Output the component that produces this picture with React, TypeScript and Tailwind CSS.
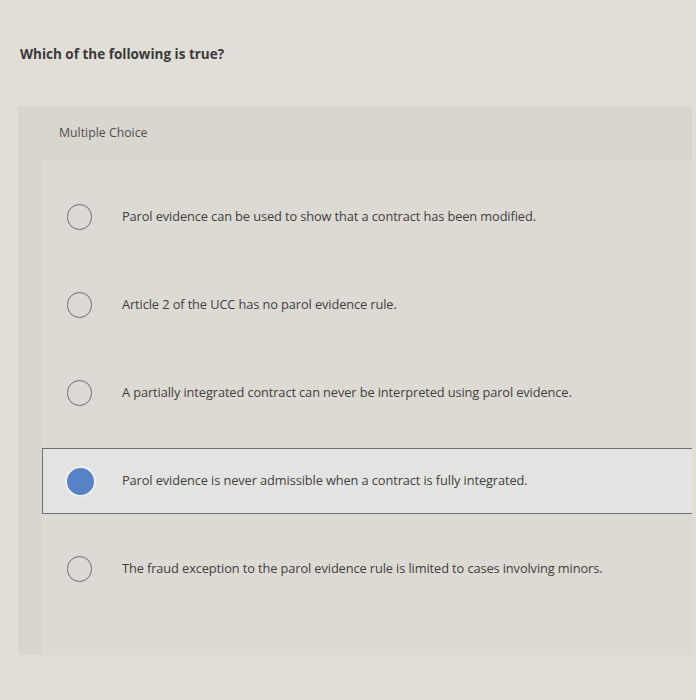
const options = [
  { id: "a", text: "Parol evidence can be used to show that a contract has been modified." },
  { id: "b", text: "Article 2 of the UCC has no parol evidence rule." },
  { id: "c", text: "A partially integrated contract can never be interpreted using parol evidence." },
  { id: "d", text: "Parol evidence is never admissible when a contract is fully integrated.", selected: true },
  { id: "e", text: "The fraud exception to the parol evidence rule is limited to cases involving minors." },
];

function Radio({ selected }: { selected?: boolean }) {
  if (selected) {
    return (
      <span className="ml-[22px] mr-[26px] size-[31px] shrink-0 rounded-full border-2 border-[#eef0f0] bg-[#5783c6]" />
    );
  }
  return (
    <span className="ml-[24px] mr-[30px] h-[26px] w-[25px] shrink-0 rounded-full border-[1.5px] border-[#6e6e6e]" />
  );
}

export default function App() {
  return (
    <main
      className="h-[700px] overflow-hidden bg-[#e1ded8] pt-[44px] text-[#424242]"
      style={{ fontFamily: "'Open Sans', Lato, sans-serif" }}
    >
      <h1 className="pl-5 text-[13.5px] font-bold leading-5 text-[#3a3a3a]">
        Which of the following is true?
      </h1>
      <section className="ml-[18px] mr-[4px] mt-[42px] bg-[#d9d6d0]">
        <header className="flex h-[54px] items-center pl-[41px] text-[12.3px] text-[#4f4f4f]">
          Multiple Choice
        </header>
        <div className="ml-[24px] bg-[#dddad4] pb-[42px] pt-[13px]">
          {options.map((o) => (
            <div key={o.id} className="flex h-[88px] items-center">
              <div
                className={
                  o.selected
                    ? "flex h-[66px] w-full items-center border-[1.5px] border-r-0 border-[#6b6f72] bg-[#e3e4e2]"
                    : "flex h-[66px] w-full items-center border-[1.5px] border-transparent"
                }
              >
                <Radio selected={o.selected} />
                <span className="text-[12.8px] tracking-[-0.1px] text-[#3f3f3f]">{o.text}</span>
              </div>
            </div>
          ))}
        </div>
      </section>
    </main>
  );
}
